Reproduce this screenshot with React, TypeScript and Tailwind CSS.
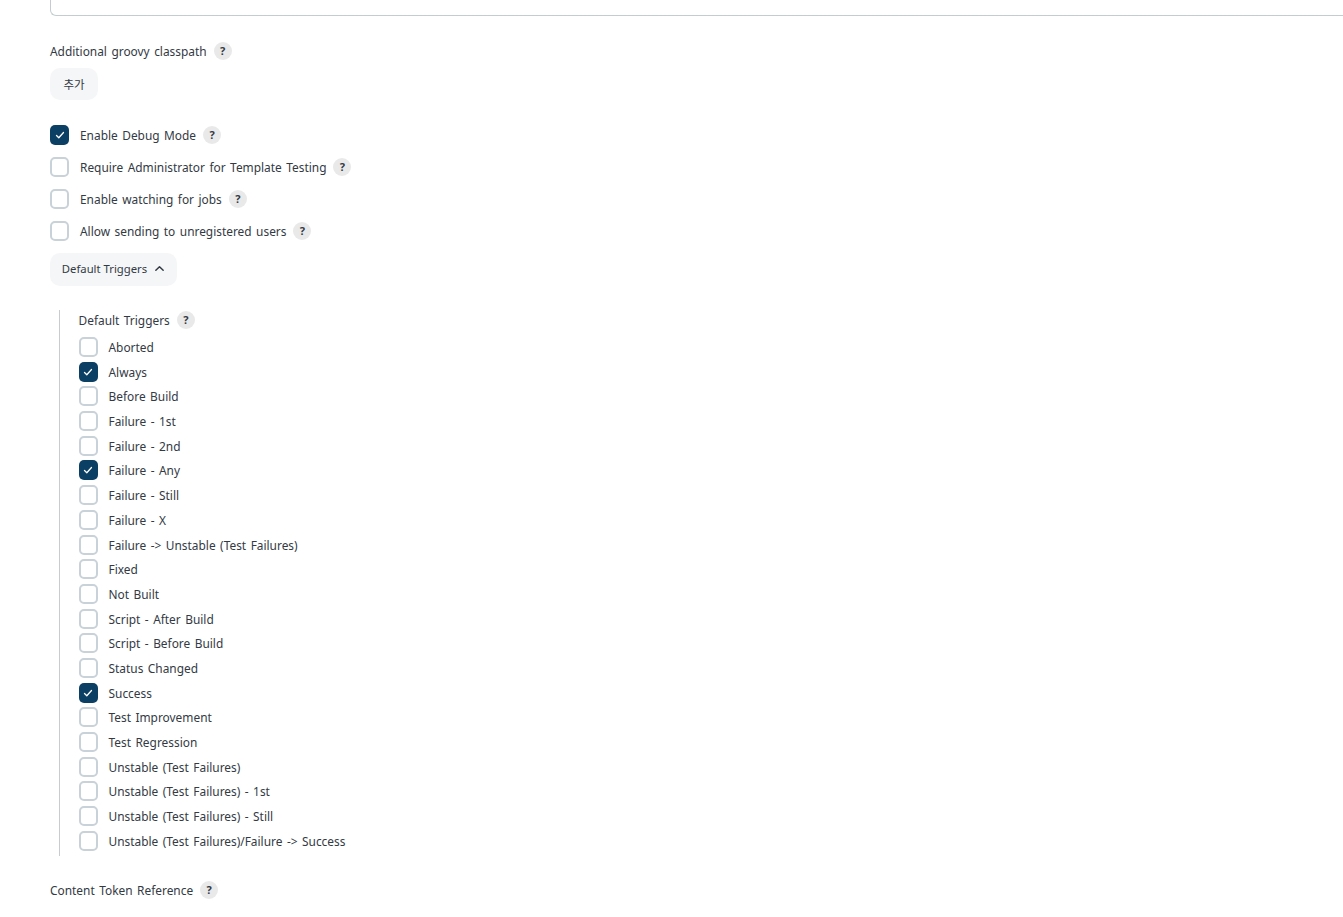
import React from "react";

const triggers: [string, boolean][] = [
  ["Aborted", false],
  ["Always", true],
  ["Before Build", false],
  ["Failure - 1st", false],
  ["Failure - 2nd", false],
  ["Failure - Any", true],
  ["Failure - Still", false],
  ["Failure - X", false],
  ["Failure -> Unstable (Test Failures)", false],
  ["Fixed", false],
  ["Not Built", false],
  ["Script - After Build", false],
  ["Script - Before Build", false],
  ["Status Changed", false],
  ["Success", true],
  ["Test Improvement", false],
  ["Test Regression", false],
  ["Unstable (Test Failures)", false],
  ["Unstable (Test Failures) - 1st", false],
  ["Unstable (Test Failures) - Still", false],
  ["Unstable (Test Failures)/Failure -> Success", false],
];

function Help() {
  return (
    <span className="ml-[7px] flex h-[18px] w-[18px] items-center justify-center rounded-full bg-[#e9e9ea] text-[11px] font-bold text-[#333a44]">
      ?
    </span>
  );
}

function Box({ checked }: { checked: boolean }) {
  return checked ? (
    <span className="flex h-5 w-[19px] shrink-0 items-center justify-center rounded-[5px] bg-[#0b3f63]">
      <svg width="12" height="12" viewBox="0 0 12 12" fill="none">
        <path d="M2.5 6.5 L4.8 8.8 L9.5 3.5" stroke="#fff" strokeWidth="1.3" strokeLinecap="round" strokeLinejoin="round" />
      </svg>
    </span>
  ) : (
    <span className="h-5 w-[19px] shrink-0 rounded-[5px] border-2 border-[#c8d2d8] bg-white" />
  );
}

export default function App() {
  return (
    <div className="h-[917px] w-[1343px] overflow-hidden bg-white pl-[50px] text-[11.9px] leading-[20px] text-[#333a44] [word-spacing:1.4px] [font-family:'Noto_Sans','Noto_Sans_CJK_KR',sans-serif]">
      <div className="h-4 w-[1320px] rounded-bl-[6px] border-b border-l border-[#c3cdd0]" />
      <div className="mt-[26px] flex h-[18px] items-center">
        <span>Additional groovy classpath</span>
        <Help />
      </div>
      <button className="mt-[8px] flex h-[32px] w-[48px] items-center justify-center rounded-[10px] bg-[#f5f6f8] pt-px text-[11.5px] text-[#333a44]">
        추가
      </button>
      <div className="mt-[19px] flex flex-col">
        {[
          ["Enable Debug Mode", true],
          ["Require Administrator for Template Testing", false],
          ["Enable watching for jobs", false],
          ["Allow sending to unregistered users", false],
        ].map(([label, on]) => (
          <div key={label as string} className="flex h-[32px] items-center">
            <Box checked={on as boolean} />
            <span className="ml-[11px]">{label as string}</span>
            <Help />
          </div>
        ))}
      </div>
      <button className="mt-[6px] flex h-[33px] w-[127px] items-center justify-center gap-[7px] rounded-[10px] bg-[#f5f6f8] pb-[2px] text-[11.3px]">
        Default Triggers
        <svg width="11" height="11" viewBox="0 0 12 12" fill="none">
          <path d="M2 8 L6 4 L10 8" stroke="#333a44" strokeWidth="1.6" strokeLinecap="round" strokeLinejoin="round" />
        </svg>
      </button>
      <div className="ml-[9px] mt-[24px] h-[546px] border-l border-[#c8cccf] pl-[18.5px]">
        <div className="flex h-[20px] items-center">
          <span>Default Triggers</span>
          <Help />
        </div>
        <div className="mt-[4.7px] flex flex-col">
          {triggers.map(([label, on]) => (
            <div key={label} className="flex h-[24.7px] items-center">
              <Box checked={on} />
              <span className="ml-[11px]">{label}</span>
            </div>
          ))}
        </div>
      </div>
      <div className="mt-[24px] flex h-[20px] items-center">
        <span>Content Token Reference</span>
        <Help />
      </div>
    </div>
  );
}
